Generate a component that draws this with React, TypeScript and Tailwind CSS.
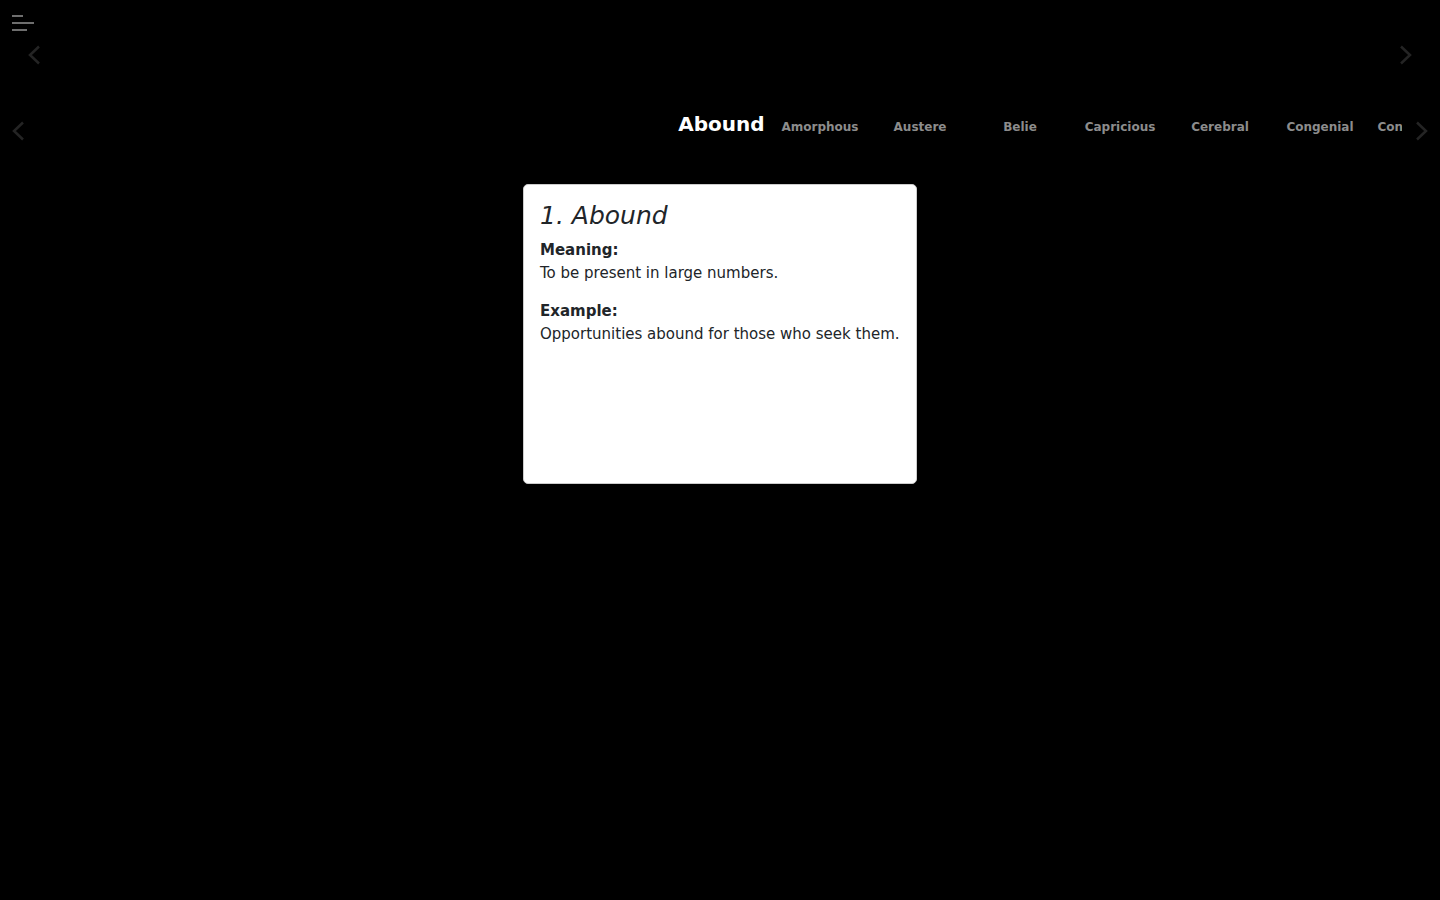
import React from "react";

const words = [
  "Abound",
  "Amorphous",
  "Austere",
  "Belie",
  "Capricious",
  "Cerebral",
  "Congenial",
  "Conspicuous",
  "Convoluted",
];

const Chevron = ({ dir, className }: { dir: "left" | "right"; className?: string }) => (
  <svg width="14" height="20" viewBox="0 0 14 20" fill="none" className={className}>
    <path
      d={dir === "left" ? "M12 1.5 L3 10 L12 18.5" : "M2 1.5 L11 10 L2 18.5"}
      stroke="currentColor"
      strokeWidth="2.5"
    />
  </svg>
);

const App = () => {
  const active = 0;
  return (
    <div className="min-h-screen w-full bg-black font-['DejaVu_Sans',sans-serif]">
      <div className="relative h-[100px]">
        <button className="absolute left-[12px] top-[15px] flex flex-col gap-[5px]">
          <span className="block h-[2px] w-[11px] bg-[#6e6e6e]" />
          <span className="block h-[2px] w-[22px] bg-[#6e6e6e]" />
          <span className="block h-[2px] w-[15px] bg-[#6e6e6e]" />
        </button>
        <div className="flex items-center justify-between px-[27px] pt-[45px]">
          <Chevron dir="left" className="text-[#242424]" />
          <Chevron dir="right" className="text-[#242424]" />
        </div>
      </div>

      <div className="flex items-center h-[52px] px-[11px]">
        <Chevron dir="left" className="text-[#242424] shrink-0 mt-[10px]" />
        <div className="flex-1 overflow-hidden ml-[11px] mr-[13px] h-full">
          <div className="flex items-center h-full pl-[634px]">
            {words.map((w, i) => (
              <div
                key={w}
                className="w-[100px] shrink-0 flex justify-center items-center"
              >
                <span
                  className={
                    i === active
                      ? "text-white text-[20px] font-bold whitespace-nowrap -mt-[4px] ml-[3px]"
                      : "text-[#8c8c8c] text-[12px] font-bold whitespace-nowrap mt-[1px]"
                  }
                >
                  {w}
                </span>
              </div>
            ))}
          </div>
        </div>
        <Chevron dir="right" className="text-[#242424] shrink-0 mt-[10px]" />
      </div>

      <div className="flex justify-center pt-[32px]">
        <div className="w-[394px] h-[300px] bg-white rounded-[5px] border border-[#ccc] px-[16px] pt-[15px] text-[#212529]">
          <h2 className="italic text-[25px] leading-[32px]">1. Abound</h2>
          <div className="mt-[7px] text-[15px] leading-[23px]">
            <p className="font-bold">Meaning:</p>
            <p>To be present in large numbers.</p>
          </div>
          <div className="mt-[15px] text-[15px] leading-[23px]">
            <p className="font-bold">Example:</p>
            <p>Opportunities abound for those who seek them.</p>
          </div>
        </div>
      </div>
    </div>
  );
};

export default App;
